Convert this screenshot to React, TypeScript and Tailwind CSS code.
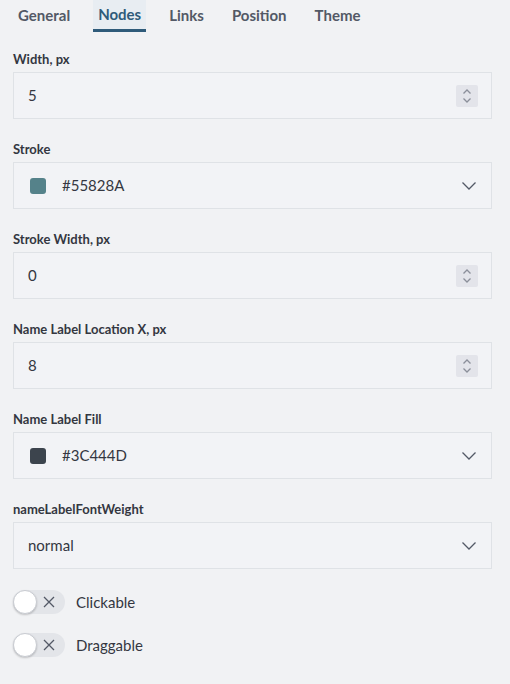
import { useState } from "react";

const tabs = ["General", "Nodes", "Links", "Position", "Theme"];

function Label({ children }: { children: React.ReactNode }) {
  return (
    <div className="mb-[5px] h-[16px] text-[13px] font-bold leading-[16px] text-[#343741]">
      {children}
    </div>
  );
}

function Chevron() {
  return (
    <svg width="16" height="10" viewBox="0 0 16 10" fill="none" className="text-[#535966]">
      <path d="M1.5 1.5 L8 8 L14.5 1.5" stroke="currentColor" strokeWidth="1.3" />
    </svg>
  );
}

function NumberField({ label, value }: { label: string; value: string }) {
  return (
    <div className="mb-[22px]">
      <Label>{label}</Label>
      <div className="flex h-[47px] items-center justify-between border border-[#dfe2e6] bg-[#f2f3f6] pl-[14px] pr-[13px]">
        <span className="text-[15px] text-[#343741]">{value}</span>
        <div className="flex h-[22px] w-[22px] items-center justify-center rounded-[2px] bg-[#e3e4ea]">
          <svg width="10" height="16" viewBox="0 0 10 16" fill="none" className="text-[#8b8f9a]">
            <path d="M1.5 5.5 L5 2 L8.5 5.5" stroke="currentColor" strokeWidth="1.3" />
            <path d="M1.5 10.5 L5 14 L8.5 10.5" stroke="currentColor" strokeWidth="1.3" />
          </svg>
        </div>
      </div>
    </div>
  );
}

function ColorField({ label, color }: { label: string; color: string }) {
  return (
    <div className="mb-[22px]">
      <Label>{label}</Label>
      <div className="flex h-[47px] items-center justify-between border border-[#dfe2e6] bg-[#f2f3f6] pl-[16px] pr-[14px]">
        <div className="flex items-center gap-[16px]">
          <span className="h-[16px] w-[16px] rounded-[3px]" style={{ backgroundColor: color }} />
          <span className="text-[15px] text-[#343741]">{color}</span>
        </div>
        <Chevron />
      </div>
    </div>
  );
}

function SelectField({ label, value }: { label: string; value: string }) {
  return (
    <div className="mb-[21px]">
      <Label>{label}</Label>
      <div className="flex h-[47px] items-center justify-between border border-[#dfe2e6] bg-[#f2f3f6] pl-[14px] pr-[14px]">
        <span className="text-[15px] text-[#343741]">{value}</span>
        <Chevron />
      </div>
    </div>
  );
}

function Toggle({ label }: { label: string }) {
  return (
    <div className="flex h-[24px] items-center gap-[11px]">
      <div className="relative h-[24px] w-[52px] rounded-full bg-[#e3e5e9]">
        <span className="absolute left-0 top-0 h-[24px] w-[24px] rounded-full border border-[#c9ccd2] bg-white shadow-[0_1px_2px_rgba(0,0,0,0.2)]" />
        <svg
          width="12"
          height="12"
          viewBox="0 0 12 12"
          className="absolute left-[30px] top-[6px] text-[#535966]"
        >
          <path d="M1 1 L11 11 M11 1 L1 11" stroke="currentColor" strokeWidth="1.3" />
        </svg>
      </div>
      <span className="text-[15px] text-[#343741]">{label}</span>
    </div>
  );
}

export default function App() {
  const [active, setActive] = useState("Nodes");

  return (
    <div
      className="min-h-[684px] w-[510px] bg-[#f1f2f4]"
      style={{ fontFamily: "Lato, 'Noto Sans', sans-serif" }}
    >
      <nav className="flex h-[32px] items-start gap-[18px] pl-[13px]">
        {tabs.map((t) => (
          <button
            key={t}
            type="button"
            onClick={() => setActive(t)}
            className={
              t === active
                ? "h-[32px] border-b-[3px] border-[#2f5b7a] bg-[#e8edf2] px-[5px] pb-[2px] text-[15px] font-bold leading-[26px] text-[#2f5b7a]"
                : "h-[32px] px-[5px] pb-[2px] text-[15px] font-bold leading-[26px] text-[#535966]"
            }
          >
            {t}
          </button>
        ))}
      </nav>

      <div className="pl-[13px] pr-[18px] pt-[19px]">
        <NumberField label="Width, px" value="5" />
        <ColorField label="Stroke" color="#55828A" />
        <NumberField label="Stroke Width, px" value="0" />
        <NumberField label="Name Label Location X, px" value="8" />
        <ColorField label="Name Label Fill" color="#3C444D" />
        <SelectField label="nameLabelFontWeight" value="normal" />

        <div className="flex flex-col gap-[19px]">
          <Toggle label="Clickable" />
          <Toggle label="Draggable" />
        </div>
      </div>
    </div>
  );
}
